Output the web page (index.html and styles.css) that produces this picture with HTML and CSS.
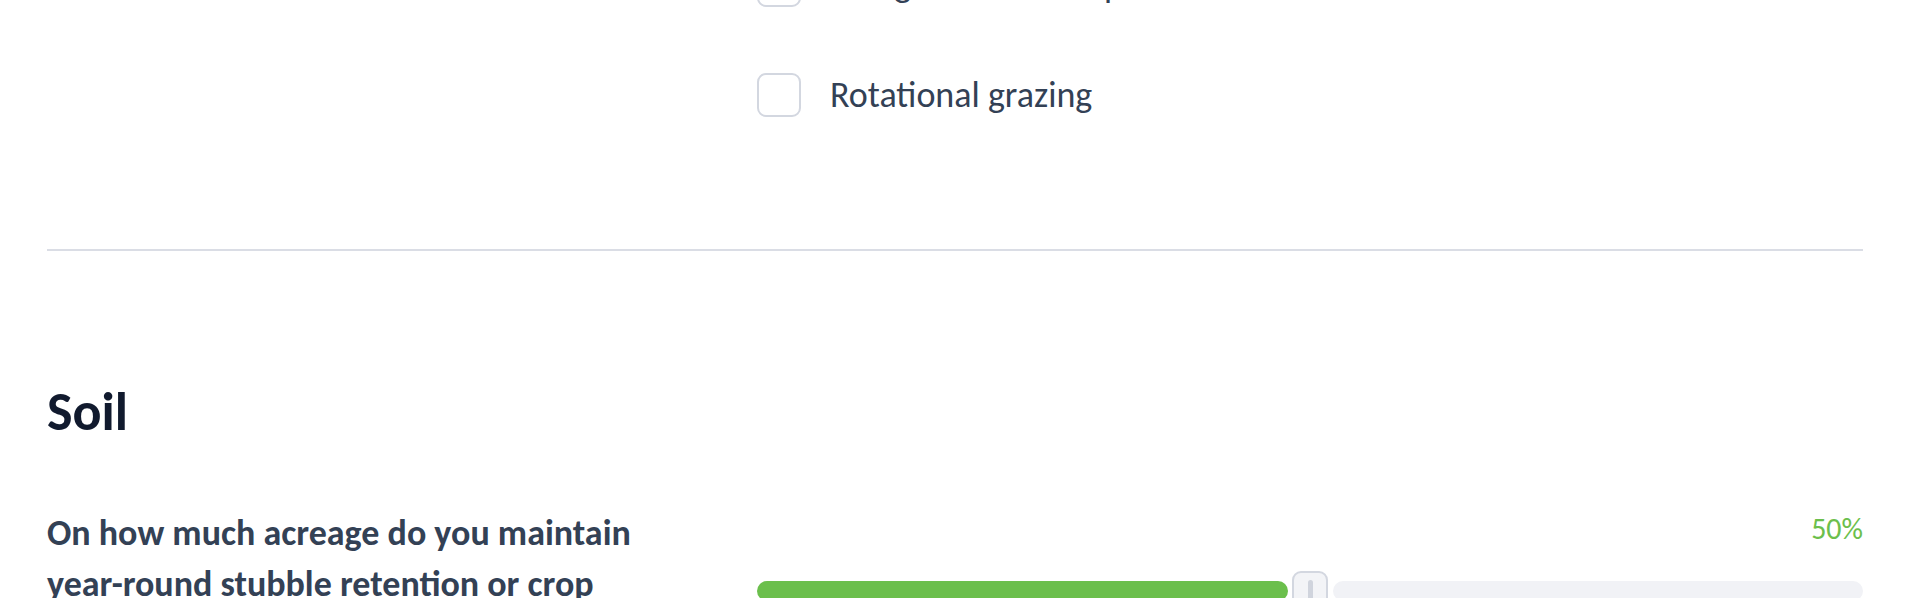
FILE: index.html
```html
<!DOCTYPE html>
<html lang="en">
<head>
<meta charset="utf-8">
<title>Farm practices</title>
<link rel="stylesheet" href="styles.css">
</head>
<body>
<main class="page">
  <section class="question">
    <div class="options">
      <label class="option"><span class="box"></span><span class="option-text">Using a diverse crop rotation</span></label>
      <label class="option"><span class="box"></span><span class="option-text">Rotational grazing</span></label>
    </div>
  </section>

  <hr class="divider">

  <section class="group">
    <h2 class="group-title">Soil</h2>
    <div class="question">
      <div class="q-label">On how much acreage do you maintain year-round stubble retention or crop residue cover?</div>
      <div class="slider-col">
        <div class="value">50%</div>
        <div class="slider">
          <div class="fill"></div>
          <div class="thumb"><span class="grip"></span></div>
          <div class="rest"></div>
        </div>
      </div>
    </div>
  </section>
</main>
</body>
</html>
```

FILE: styles.css
```css
html, body {
  margin: 0;
  padding: 0;
  background: #ffffff;
  overflow: hidden;
}

body {
  font-family: "Carlito", "Lato", "Liberation Sans", sans-serif;
  color: #334155;
}

.page {
  margin-top: -42px;
  padding: 0 51px 0 47px;
}

.question {
  display: grid;
  grid-template-columns: 620px 1fr;
  column-gap: 90px;
  align-items: start;
}

.options {
  grid-column: 2;
  display: flex;
  flex-direction: column;
  gap: 56px;
}

.option {
  display: flex;
  align-items: center;
  gap: 29px;
  height: 54px;
  font-size: 36px;
  line-height: 54px;
  color: #334155;
}

.box {
  flex: none;
  box-sizing: border-box;
  width: 44px;
  height: 44px;
  border: 2px solid #d3d7e0;
  border-radius: 9px;
  background: #ffffff;
}

.divider {
  margin: 127px 0 0 0;
  border: 0;
  height: 2px;
  background: #dadde5;
}

.group-title {
  margin: 129px 0 0 0;
  font-size: 54px;
  line-height: 64px;
  font-weight: 700;
  color: #111a2e;
}

.group .question {
  margin-top: 64px;
}

.q-label {
  font-size: 36px;
  line-height: 51px;
  font-weight: 700;
  color: #334155;
}

.slider-col {
  margin-top: -2px;
}

.value {
  text-align: right;
  font-size: 30px;
  line-height: 45px;
  color: #6cbf4c;
}

.slider {
  margin-top: 20px;
  height: 40px;
  display: flex;
  align-items: center;
}

.fill {
  flex: none;
  width: calc(50% - 22px);
  height: 20px;
  border-radius: 10px;
  background: #6bbf4c;
}

.thumb {
  flex: none;
  box-sizing: border-box;
  width: 36px;
  height: 40px;
  margin: 0 5px 0 4px;
  border: 2px solid #d3d7e0;
  border-radius: 9px;
  background: #f3f4f7;
  display: flex;
  justify-content: center;
  padding-top: 7px;
}

.grip {
  width: 5px;
  height: 22px;
  border-radius: 3px;
  background: #d0d4dd;
}

.rest {
  flex: 1;
  height: 20px;
  border-radius: 10px;
  background: #f1f2f6;
}
```
